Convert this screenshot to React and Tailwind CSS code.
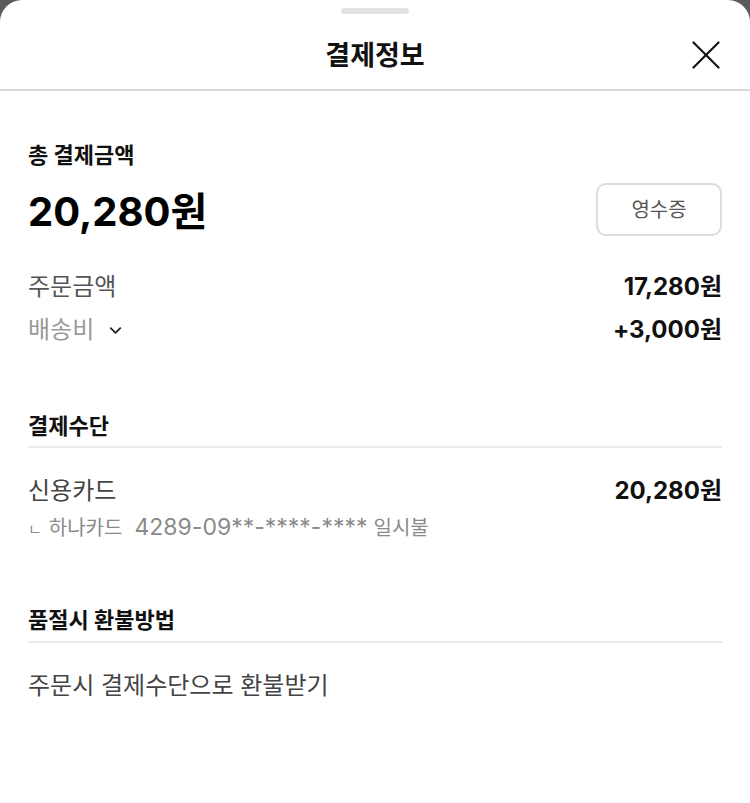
import React from 'react'
import { ChevronDown } from 'lucide-react'

const font = { fontFamily: 'Inter, "Noto Sans CJK KR", sans-serif' }

function Row({ label, value, labelClass, children }) {
  return (
    <div className='flex items-center justify-between h-[32px]'>
      <div className={`flex items-center text-[24px] ${labelClass}`}>
        {label}
        {children}
      </div>
      <div className='text-[24px] font-bold text-[#111]'>{value}</div>
    </div>
  )
}

export default function App() {
  return (
    <div className='bg-[#5b5b5b] h-[803px] w-full' style={font}>
      <div className='bg-white h-[803px] rounded-t-[22px] flex flex-col'>
        {/* drag handle */}
        <div className='pt-[8px] flex justify-center'>
          <div className='w-[68px] h-[6px] rounded-full bg-[#e2e2e2]'></div>
        </div>

        {/* header */}
        <div className='relative h-[77px] flex items-center justify-center pt-[9px] border-b-2 border-[#d8dbde]'>
          <h1 className='text-[27px] font-bold text-[#111]'>결제정보</h1>
          <button className='absolute right-[30px] top-[27px]'>
            <svg width='28' height='28' viewBox='0 0 28 28'>
              <line x1='1.5' y1='1.5' x2='26.5' y2='26.5' stroke='#111' strokeWidth='2.2' strokeLinecap='round' />
              <line x1='26.5' y1='1.5' x2='1.5' y2='26.5' stroke='#111' strokeWidth='2.2' strokeLinecap='round' />
            </svg>
          </button>
        </div>

        <div className='px-[28px]'>
          {/* total */}
          <div className='pt-[50px]'>
            <div className='text-[22px] leading-[28px] font-bold text-[#111]'>총 결제금액</div>
            <div className='mt-[14px] flex items-center justify-between h-[53px]'>
              <div className='text-[40px] font-bold text-[#000] pt-[4px]'>20,280원</div>
              <button className='w-[126px] h-[53px] border-2 border-[#dcdcdc] rounded-[10px] text-[20px] text-[#555]'>
                영수증
              </button>
            </div>
            <div className='mt-[35px]'>
              <Row label='주문금액' value='17,280원' labelClass='text-[#555]' />
              <div className='mt-[11px]'>
                <Row label='배송비' value='+3,000원' labelClass='text-[#9a9a9a]'>
                  <ChevronDown size={19} strokeWidth={2.3} className='ml-[12px] text-[#222]' />
                </Row>
              </div>
            </div>
          </div>

          {/* payment method */}
          <div className='mt-[66px]'>
            <div className='text-[22px] leading-[28px] font-bold text-[#111] pb-[6px] border-b-2 border-[#ebebeb]'>결제수단</div>
            <div className='mt-[27px]'>
              <Row label='신용카드' value='20,280원' labelClass='text-[#444]' />
              <div className='mt-[6px] text-[20px] leading-[28px] text-[#8a8a8a]'>
                <span className='text-[15px] mr-[7px]'>ㄴ</span>하나카드
                <span className='text-[23px] ml-[12px] mr-[6px]'>4289-09**-****-****</span>일시불
              </div>
            </div>
          </div>

          {/* refund */}
          <div className='mt-[62px]'>
            <div className='text-[22px] leading-[28px] font-bold text-[#111] pb-[7px] border-b-2 border-[#ebebeb]'>품절시 환불방법</div>
            <div className='mt-[27px] text-[24px] leading-[32px] text-[#444]'>주문시 결제수단으로 환불받기</div>
          </div>
        </div>
      </div>
    </div>
  )
}
